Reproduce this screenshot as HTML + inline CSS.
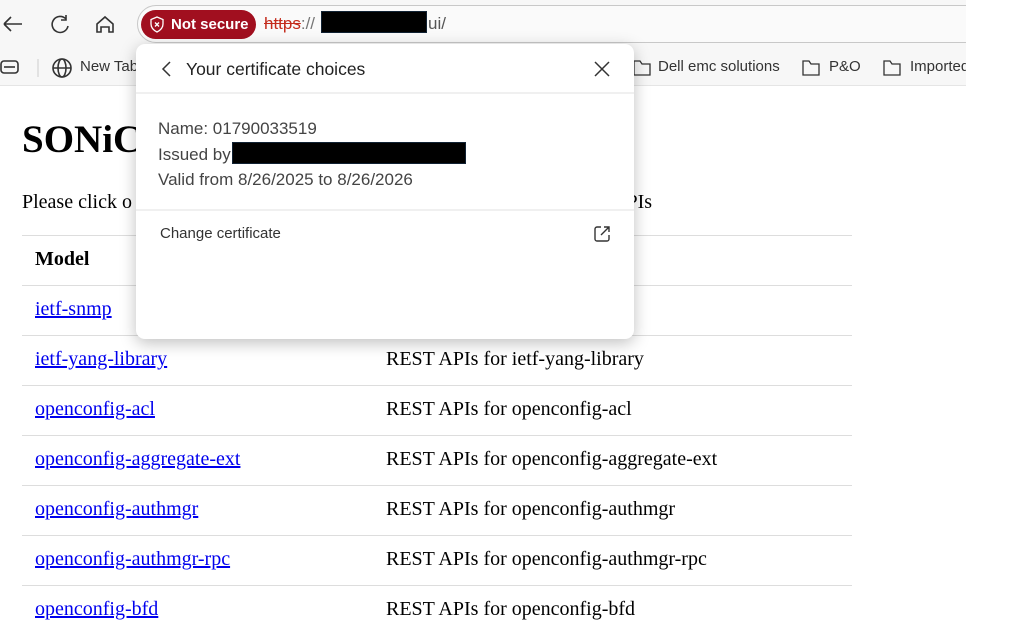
<!DOCTYPE html>
<html><head><meta charset="utf-8"><style>
*{margin:0;padding:0;box-sizing:border-box}
body{width:1036px;height:623px;overflow:hidden;background:#fff;position:relative;font-family:"Liberation Sans",sans-serif}
.abs{position:absolute}
.top{left:0;top:0;width:966px;height:48px;background:#f7f7f7;overflow:hidden}
.bm{left:0;top:48px;width:966px;height:38px;background:#f7f7f7;border-bottom:1px solid #e5e5e5}
.addr{left:137px;top:5px;width:860px;height:38px;border:1px solid #c8c8c8;border-radius:19px;background:#fafafa}
.ns{left:141px;top:10px;width:115px;height:29px;background:#a10f1f;border-radius:15px;color:#fff;font-size:15px;font-weight:bold;line-height:29px;padding-left:30px}
.serif{font-family:"Liberation Serif",serif;color:#000}
.row{left:22px;width:830px;height:1px;background:#ddd}
.lnk{color:#0000ee;text-decoration:underline;font-size:20px;left:35px}
.desc{font-size:20px;left:386px}
.pop{left:136px;top:44px;width:498px;height:295px;background:#fff;border-radius:9px;box-shadow:0 4px 16px rgba(0,0,0,.25)}
.bmt{font-size:15px;color:#333;top:58px}
</style></head><body>
<div class="abs top"><div class="abs addr"></div></div>
<div class="abs bm"></div>
<svg class="abs" style="left:0;top:10px" width="130" height="30" viewBox="0 0 130 30" fill="none" stroke="#333" stroke-width="1.6">
<path d="M4 14H22M4 14L11 7M4 14L11 21"/>
<path d="M66 9A8 8 0 1 0 68 16"/><path d="M66 5V10H61"/>
<path d="M97 14L105 7L113 14V22H109V17H101V22H97Z"/>
</svg>
<div class="abs ns">Not secure</div>
<svg class="abs" style="left:149px;top:16px" width="16" height="17" viewBox="0 0 16 17" fill="none" stroke="#fff" stroke-width="1.3"><path d="M8 1L14 3.5V8C14 12 11 14.5 8 16C5 14.5 2 12 2 8V3.5Z"/><path d="M6 6.5L10 10.5M10 6.5L6 10.5"/></svg>
<div class="abs" style="left:264px;top:14px;font-size:17px;color:#c42b1c"><span style="text-decoration:line-through">https</span><span style="color:#777">://</span></div>
<div class="abs" style="left:321px;top:11px;width:106px;height:22px;background:#000;border:1px solid #123"></div>
<div class="abs" style="left:428px;top:14px;font-size:17px;color:#555">ui/</div>
<svg class="abs" style="left:0;top:58px" width="80" height="20" viewBox="0 0 80 20" fill="none" stroke="#333" stroke-width="1.6"><rect x="1" y="3" width="17" height="12" rx="3"/><path d="M4 9H15"/><path d="M38 1V19" stroke="#ccc" stroke-width="1"/><circle cx="62" cy="10" r="9"/><ellipse cx="62" cy="10" rx="4" ry="9"/><path d="M53 10H71"/></svg>
<div class="abs bmt" style="left:80px">New Tab</div>
<svg class="abs" style="left:632px;top:58px" width="350" height="20" viewBox="0 0 350 20" fill="none" stroke="#333" stroke-width="1.3"><path d="M2 3H8L10 6H18V17H2Z"/><path d="M171 3H177L179 6H187V17H171Z"/><path d="M252 3H258L260 6H268V17H252Z"/></svg>
<div class="abs bmt" style="left:658px">Dell emc solutions</div>
<div class="abs bmt" style="left:829px">P&amp;O</div>
<div class="abs bmt" style="left:910px;width:56px;overflow:hidden;white-space:nowrap">Imported</div>
<div class="abs serif" style="left:22px;top:117px;font-size:39px;font-weight:bold">SONiC</div>
<div class="abs serif" style="left:22px;top:191px;font-size:20px">Please click o</div>
<div class="abs serif" style="left:612px;top:191px;font-size:20px">APIs</div>
<div class="abs row" style="top:235px"></div>
<div class="abs serif" style="left:35px;top:248px;font-size:20px;font-weight:bold">Model</div>
<div class="abs row" style="top:285px"></div>
<div class="abs serif lnk" style="top:298px">ietf-snmp</div>
<div class="abs row" style="top:335px"></div>
<div class="abs serif lnk" style="top:348px">ietf-yang-library</div><div class="abs serif desc" style="top:348px">REST APIs for ietf-yang-library</div>
<div class="abs row" style="top:385px"></div>
<div class="abs serif lnk" style="top:398px">openconfig-acl</div><div class="abs serif desc" style="top:398px">REST APIs for openconfig-acl</div>
<div class="abs row" style="top:435px"></div>
<div class="abs serif lnk" style="top:448px">openconfig-aggregate-ext</div><div class="abs serif desc" style="top:448px">REST APIs for openconfig-aggregate-ext</div>
<div class="abs row" style="top:485px"></div>
<div class="abs serif lnk" style="top:498px">openconfig-authmgr</div><div class="abs serif desc" style="top:498px">REST APIs for openconfig-authmgr</div>
<div class="abs row" style="top:535px"></div>
<div class="abs serif lnk" style="top:548px">openconfig-authmgr-rpc</div><div class="abs serif desc" style="top:548px">REST APIs for openconfig-authmgr-rpc</div>
<div class="abs row" style="top:585px"></div>
<div class="abs serif lnk" style="top:598px">openconfig-bfd</div><div class="abs serif desc" style="top:598px">REST APIs for openconfig-bfd</div>
<div class="abs pop">
 <svg class="abs" style="left:24px;top:16px" width="14" height="18" viewBox="0 0 14 18" fill="none" stroke="#333" stroke-width="1.5"><path d="M10 2L3 9L10 16"/></svg>
 <div class="abs" style="left:50px;top:15px;font-size:17.5px;color:#222">Your certificate choices</div>
 <svg class="abs" style="left:457px;top:16px" width="18" height="18" viewBox="0 0 18 18" stroke="#333" stroke-width="1.5"><path d="M2 2L16 16M16 2L2 16"/></svg>
 <div class="abs" style="left:0;top:48px;width:498px;height:2px;background:#f0f0f0"></div>
 <div class="abs" style="left:22px;top:72px;font-size:17px;color:#444;line-height:25.5px">Name: 01790033519<br>Issued by:<br>Valid from 8/26/2025 to 8/26/2026</div>
 <div class="abs" style="left:96px;top:98px;width:234px;height:22px;background:#000;border:1px solid #123"></div>
 <div class="abs" style="left:0;top:165px;width:498px;height:2px;background:#f0f0f0"></div>
 <div class="abs" style="left:24px;top:181px;font-size:15px;color:#333">Change certificate</div>
 <svg class="abs" style="left:456px;top:180px" width="20" height="20" viewBox="0 0 20 20" fill="none" stroke="#333" stroke-width="1.4"><path d="M9 3H5A2 2 0 0 0 3 5V15A2 2 0 0 0 5 17H15A2 2 0 0 0 17 15V11"/><path d="M12 3H17V8M17 3L9 11"/></svg>
</div>
</body></html>
